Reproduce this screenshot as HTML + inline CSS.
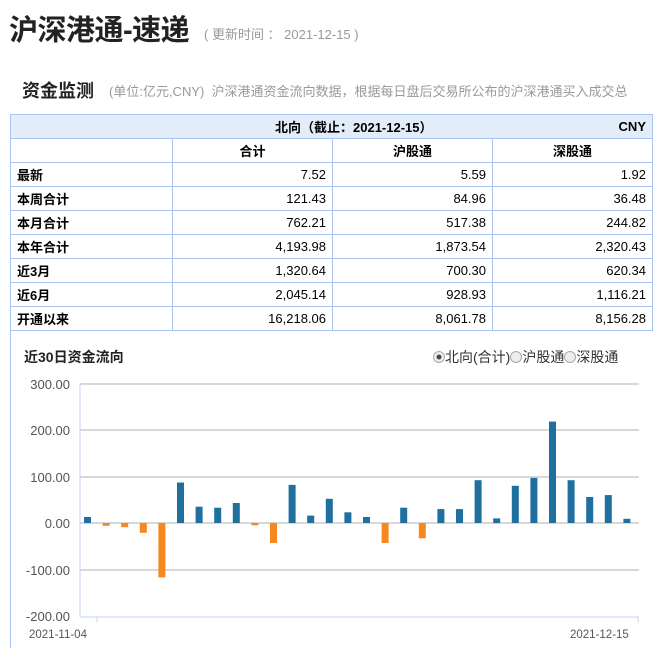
<!DOCTYPE html>
<html><head><meta charset="utf-8"><style>
*{margin:0;padding:0;box-sizing:border-box}
body{width:653px;height:648px;overflow:hidden;background:#fff;font-family:"Liberation Sans","Noto Sans CJK SC",sans-serif;position:relative}
.t{position:absolute;white-space:nowrap}
table{position:absolute;left:10px;top:114px;width:643px;border-collapse:collapse;font-size:13px;color:#000}
td{border:1px solid #a9c4f5;height:24px;padding:0 6px;font-weight:bold}
td.n{text-align:right;font-weight:normal}
tr.h td{background:#e3edf9;text-align:center}
tr.c td{text-align:center}
</style></head><body>
<div class="t" style="left:9px;top:7px;font-size:29px;font-weight:bold;color:#222;letter-spacing:-0.5px">沪深港通-速递</div>
<div class="t" style="left:204px;top:24px;font-size:13px;color:#999">( 更新时间 ： 2021-12-15 )</div>
<div class="t" style="left:22px;top:77px;font-size:18px;font-weight:bold;color:#222">资金监测</div>
<div class="t" style="left:109px;top:81px;font-size:13px;color:#999">(单位:亿元,CNY)&nbsp; 沪深港通资金流向数据，根据每日盘后交易所公布的沪深港通买入成交总</div>
<table>
<tr class="h"><td colspan="3" style="text-align:right;padding-right:60px;border-right:none">北向（截止：2021-12-15）</td><td style="text-align:right;border-left:none">CNY</td></tr>
<tr class="c"><td style="width:162px"></td><td style="width:160px">合计</td><td style="width:160px">沪股通</td><td>深股通</td></tr>
<tr><td>最新</td><td class="n">7.52</td><td class="n">5.59</td><td class="n">1.92</td></tr>
<tr><td>本周合计</td><td class="n">121.43</td><td class="n">84.96</td><td class="n">36.48</td></tr>
<tr><td>本月合计</td><td class="n">762.21</td><td class="n">517.38</td><td class="n">244.82</td></tr>
<tr><td>本年合计</td><td class="n">4,193.98</td><td class="n">1,873.54</td><td class="n">2,320.43</td></tr>
<tr><td>近3月</td><td class="n">1,320.64</td><td class="n">700.30</td><td class="n">620.34</td></tr>
<tr><td>近6月</td><td class="n">2,045.14</td><td class="n">928.93</td><td class="n">1,116.21</td></tr>
<tr><td>开通以来</td><td class="n">16,218.06</td><td class="n">8,061.78</td><td class="n">8,156.28</td></tr>
</table>
<div style="position:absolute;left:10px;top:330px;width:643px;height:318px;border-left:1px solid #a9c4f5"></div>
<div class="t" style="left:24px;top:347px;font-size:14px;font-weight:bold;color:#222">近30日资金流向</div>
<div class="t" style="left:433px;top:347px;font-size:14px;color:#333">
<span style="display:inline-block;width:12px;height:12px;border-radius:50%;border:1px solid #aaa;background:radial-gradient(#444 30%,#eee 40%);vertical-align:-1px"></span>北向(合计)<span style="display:inline-block;width:12px;height:12px;border-radius:50%;border:1px solid #aaa;background:#eee;vertical-align:-1px"></span>沪股通<span style="display:inline-block;width:12px;height:12px;border-radius:50%;border:1px solid #aaa;background:#eee;vertical-align:-1px"></span>深股通</div>
<svg style="position:absolute;left:0;top:0" width="653" height="648">
<g stroke="#ccc" stroke-width="1.5">
<line x1="80" y1="384" x2="639" y2="384"/><line x1="80" y1="430" x2="639" y2="430"/><line x1="80" y1="477" x2="639" y2="477"/><line x1="80" y1="523" x2="639" y2="523"/><line x1="80" y1="570" x2="639" y2="570"/>
</g>
<g stroke="#c5d5ef" stroke-width="1"><line x1="80" y1="384" x2="80" y2="617"/><line x1="80" y1="617" x2="639" y2="617"/><line x1="97" y1="617" x2="97" y2="622"/><line x1="638" y1="617" x2="638" y2="622"/></g>
<g font-size="13" fill="#555" text-anchor="end" font-family="Liberation Sans,sans-serif">
<text x="70" y="389">300.00</text><text x="70" y="435">200.00</text><text x="70" y="482">100.00</text><text x="70" y="528">0.00</text><text x="70" y="575">-100.00</text><text x="70" y="621">-200.00</text>
</g>
<g font-size="11.5" fill="#555" font-family="Liberation Sans,sans-serif"><text x="29" y="638">2021-11-04</text><text x="570" y="638">2021-12-15</text></g>
<g id="bars"></g>
</svg>
<script>
var v=[13,-6,-9,-21,-117,87,35,33,43,-5,-43,82,16,52,23,13,-43,33,-33,30,30,92,10,80,97,218,92,56,60,9];
var g=document.getElementById('bars'),s='';
for(var i=0;i<v.length;i++){var x=84+i*18.6,h=Math.abs(v[i])*0.465,y=v[i]>0?523-h:523;
s+='<rect x="'+x.toFixed(1)+'" y="'+y.toFixed(1)+'" width="7" height="'+h.toFixed(1)+'" fill="'+(v[i]>0?'#1f6f9f':'#f5891f')+'"/>';}
g.innerHTML=s;
</script>
</body></html>
